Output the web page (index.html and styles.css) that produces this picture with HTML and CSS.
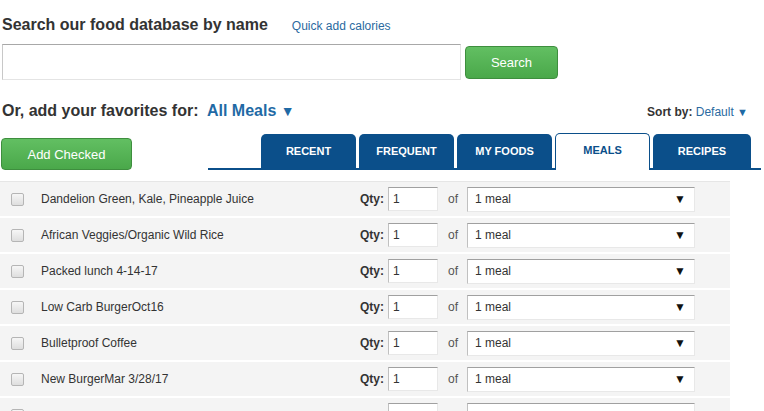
FILE: index.html
```html
<!DOCTYPE html>
<html>
<head>
<meta charset="utf-8">
<link rel="stylesheet" href="styles.css">
</head>
<body>
<div class="page">
  <div class="search-head">
    <h1 class="title">Search our food database by name</h1>
    <a class="link">Quick add calories</a>
  </div>
  <div class="search-row">
    <div class="search-input"></div>
    <button class="btn btn-search">Search</button>
  </div>
  <div class="fav-head">
    <div class="fav-title">Or, add your favorites for: <span class="meal-pick">All Meals <span class="caret">&#9660;</span></span></div>
    <div class="sort">Sort by: <span class="sort-val">Default <span class="caret-s">&#9660;</span></span></div>
  </div>
  <div class="tab-row">
    <button class="btn btn-add">Add Checked</button>
    <div class="tabs">
      <div class="tab">RECENT</div>
      <div class="tab">FREQUENT</div>
      <div class="tab">MY FOODS</div>
      <div class="tab active">MEALS</div>
      <div class="tab">RECIPES</div>
    </div>
  </div>
  <div class="table">
    <div class="row"><span class="cb"></span><span class="name">Dandelion Green, Kale, Pineapple Juice</span><span class="qty">Qty:</span><span class="qin">1</span><span class="of">of</span><span class="sel">1 meal<span class="arr">&#9660;</span></span></div>
    <div class="row"><span class="cb"></span><span class="name">African Veggies/Organic Wild Rice</span><span class="qty">Qty:</span><span class="qin">1</span><span class="of">of</span><span class="sel">1 meal<span class="arr">&#9660;</span></span></div>
    <div class="row"><span class="cb"></span><span class="name">Packed lunch 4-14-17</span><span class="qty">Qty:</span><span class="qin">1</span><span class="of">of</span><span class="sel">1 meal<span class="arr">&#9660;</span></span></div>
    <div class="row"><span class="cb"></span><span class="name">Low Carb BurgerOct16</span><span class="qty">Qty:</span><span class="qin">1</span><span class="of">of</span><span class="sel">1 meal<span class="arr">&#9660;</span></span></div>
    <div class="row"><span class="cb"></span><span class="name">Bulletproof Coffee</span><span class="qty">Qty:</span><span class="qin">1</span><span class="of">of</span><span class="sel">1 meal<span class="arr">&#9660;</span></span></div>
    <div class="row"><span class="cb"></span><span class="name">New BurgerMar 3/28/17</span><span class="qty">Qty:</span><span class="qin">1</span><span class="of">of</span><span class="sel">1 meal<span class="arr">&#9660;</span></span></div>
    <div class="row"><span class="cb"></span><span class="name"></span><span class="qty"></span><span class="qin"></span><span class="of"></span><span class="sel"></span></div>
  </div>
</div>
</body>
</html>
```
FILE: styles.css
```css
html, body {
  margin: 0;
  padding: 0;
  background: #fff;
  overflow: hidden;
}
.page {
  font-family: "Liberation Sans", Arial, sans-serif;
  color: #333;
  width: 764px;
  height: 411px;
  overflow: hidden;
}
.search-head {
  display: flex;
  align-items: baseline;
  padding: 16px 0 0 2px;
  height: 28px;
}
.title {
  margin: 0;
  font-size: 16px;
  font-weight: bold;
  line-height: 18px;
  color: #333;
}
.link {
  margin-left: 24px;
  font-size: 12px;
  color: #2a6aa0;
}
.search-row {
  display: flex;
  align-items: center;
  padding-left: 2px;
  height: 36px;
}
.search-input {
  width: 457px;
  height: 34px;
  border: 1px solid #e4e4e4;
  border-top-color: #a8a8a8;
  border-left-color: #c8c8c8;
  background: #fff;
}
.btn {
  font-family: "Liberation Sans", Arial, sans-serif;
  color: #fff;
  border: 1px solid #3e8e3e;
  border-radius: 4px;
  background: linear-gradient(#62bf62, #4aa84a);
  padding: 0;
  cursor: pointer;
}
.btn-search {
  margin-left: 4px;
  width: 93px;
  height: 33px;
  font-size: 13px;
}
.fav-head {
  display: flex;
  justify-content: space-between;
  align-items: baseline;
  padding: 22px 16px 0 2px;
  height: 32px;
}
.fav-title {
  font-size: 16px;
  font-weight: bold;
  line-height: 18px;
}
.meal-pick {
  color: #1f6aa5;
  margin-left: 4px;
}
.caret {
  font-size: 14px;
}
.sort {
  font-size: 12px;
  font-weight: bold;
}
.sort-val {
  font-weight: normal;
  color: #2a6aa0;
}
.caret-s {
  font-size: 11px;
  color: #1f6aa5;
}
.tab-row {
  display: flex;
  align-items: flex-end;
  height: 36px;
}
.btn-add {
  margin-left: 1px;
  width: 131px;
  height: 32px;
  font-size: 13px;
}
.tabs {
  display: flex;
  align-items: flex-end;
  gap: 3px;
  margin-left: 76px;
  width: 500px;
  padding-left: 53px;
  border-bottom: 2px solid #0b4f8a;
  height: 34px;
}
.tab {
  width: 95px;
  height: 34px;
  background: #0b4f8a;
  color: #fff;
  font-size: 11px;
  font-weight: bold;
  display: flex;
  align-items: center;
  justify-content: center;
  border-radius: 5px 5px 0 0;
  box-sizing: border-box;
}
.tab.active {
  background: #fff;
  color: #0b4f8a;
  border: 1px solid #0b4f8a;
  border-bottom: none;
  height: 37px;
  margin-bottom: -2px;
  padding-bottom: 4px;
  font-weight: bold;
}
.tab:last-child {
  width: 98px;
}
.table {
  width: 730px;
  margin-top: 11px;
  border-top: 1px solid #e6e6e6;
}
.row {
  display: flex;
  align-items: center;
  height: 34px;
  background: #f4f4f4;
  border-bottom: 2px solid #fff;
  font-size: 12px;
}
.cb {
  width: 11px;
  height: 11px;
  margin-left: 11px;
  border: 1px solid #b5b5b5;
  border-radius: 2px;
  background: linear-gradient(#f6f6f6, #dedede);
}
.name {
  margin-left: 17px;
  width: 319px;
  color: #333;
}
.qty {
  width: 28px;
  font-weight: bold;
}
.qin {
  width: 44px;
  height: 22px;
  padding-left: 4px;
  background: #fff;
  border: 1px solid #e8e8e8;
  border-top-color: #a0a0a0;
  border-left-color: #c0c0c0;
  display: flex;
  align-items: center;
}
.of {
  margin-left: 10px;
  width: 19px;
  color: #555;
}
.sel {
  width: 219px;
  height: 23px;
  padding-left: 7px;
  background: #fff;
  border: 1px solid #e8e8e8;
  border-top-color: #a0a0a0;
  border-left-color: #c0c0c0;
  display: flex;
  align-items: center;
  justify-content: space-between;
  color: #333;
}
.arr {
  font-size: 12px;
  color: #111;
  margin-right: 8px;
}
```
